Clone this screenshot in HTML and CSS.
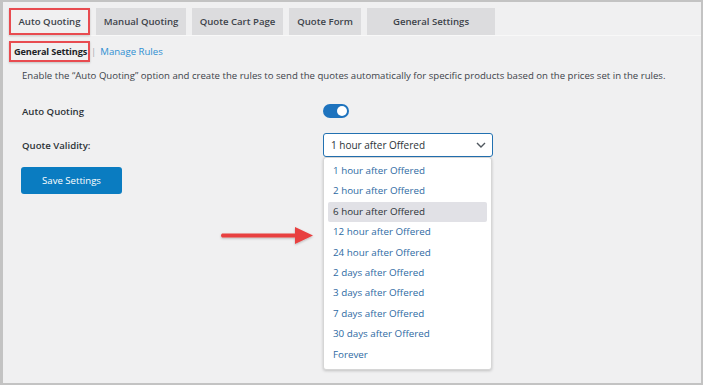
FILE: index.html
```html
<!DOCTYPE html>
<html>
<head>
<meta charset="utf-8">
<link rel="stylesheet" href="styles.css">
</head>
<body>
<div class="frame">
  <div class="tabs">
    <div class="tab tab-active w1">Auto Quoting</div>
    <div class="tab w2">Manual Quoting</div>
    <div class="tab w3">Quote Cart Page</div>
    <div class="tab w4">Quote Form</div>
    <div class="tab w5">General Settings</div>
  </div>
  <div class="subnav">
    <span class="sub-active">General Settings</span>
    <span class="sep">|</span>
    <a class="sub-link">Manage Rules</a>
  </div>
  <p class="desc">Enable the “Auto Quoting” option and create the rules to send the quotes automatically for specific products based on the prices set in the rules.</p>
  <div class="row row-toggle">
    <div class="label">Auto Quoting</div>
    <div class="toggle"><span class="knob"></span></div>
  </div>
  <div class="row row-select">
    <div class="label">Quote Validity:</div>
    <div class="select-wrap">
      <div class="select">
        <span>1 hour after Offered</span>
        <svg class="chev" width="10" height="6" viewBox="0 0 10 6"><path d="M1 1 L5 5 L9 1" fill="none" stroke="#50575e" stroke-width="1.4"/></svg>
      </div>
      <ul class="menu">
        <li>1 hour after Offered</li>
        <li>2 hour after Offered</li>
        <li class="hl">6 hour after Offered</li>
        <li>12 hour after Offered</li>
        <li>24 hour after Offered</li>
        <li>2 days after Offered</li>
        <li>3 days after Offered</li>
        <li>7 days after Offered</li>
        <li>30 days after Offered</li>
        <li>Forever</li>
      </ul>
    </div>
  </div>
  <div class="btn">Save Settings</div>
  <svg class="arrow" width="100" height="26" viewBox="0 0 100 26">
    <defs>
      <filter id="sh" x="-10%" y="-30%" width="120%" height="160%">
        <feDropShadow dx="0" dy="1" stdDeviation="1" flood-color="#000" flood-opacity="0.25"/>
      </filter>
    </defs>
    <g filter="url(#sh)">
      <path d="M4 10.5 L77 10.5 L77 4 L95 12.5 L77 21 L77 14.5 L4 14.5 Q2 12.5 4 10.5 Z" fill="#e8403f"/>
    </g>
  </svg>
</div>
</body>
</html>
```
FILE: styles.css
```css
* { box-sizing: border-box; }
html, body { margin: 0; padding: 0; }
body {
  width: 703px;
  height: 385px;
  font-family: "Open Sans", "Noto Sans", sans-serif;
  font-size: 9.6px;
  color: #3c434a;
}
.frame {
  position: relative;
  width: 703px;
  height: 385px;
  background: #f0f0f1;
  border-top: 2px solid #c3c3c3;
  border-left: 3px solid #c3c3c3;
  border-right: 2px solid #c3c3c3;
  border-bottom: 2px solid #c3c3c3;
  padding: 6px 0 0 6px;
}
.tabs {
  display: flex;
  gap: 6px;
  height: 28px;
  border-bottom: 1px solid #f8f8f8;
}
.tab {
  height: 27px;
  background: #dcdcde;
  font-weight: 600;
  font-size: 9.6px;
  color: #3c434a;
  display: flex;
  align-items: center;
  justify-content: center;
  white-space: nowrap;
}
.tab-active {
  background: #f0f0f1;
  outline: 2px solid #e84b50;
  outline-offset: -2px;
  box-shadow: 0 1px 2px rgba(0,0,0,0.2);
}
.w1 { width: 81px; }
.w2 { width: 90px; }
.w3 { width: 91px; }
.w4 { width: 72px; }
.w5 { width: 128px; }
.subnav {
  display: flex;
  align-items: center;
  margin-top: 5px;
  height: 21px;
  white-space: nowrap;
}
.sub-active {
  display: flex;
  align-items: center;
  height: 21px;
  width: 81px;
  padding-left: 3px;
  font-weight: 700;
  font-size: 9.2px;
  letter-spacing: -0.15px;
  color: #1d2327;
  border: 2px solid #e84b50;
  box-shadow: 0 1px 2px rgba(0,0,0,0.2);
  overflow: hidden;
}
.sep { color: #a7aaad; margin: 0 4px 0 1px; }
.sub-link { color: #2f8fd1; }
.desc {
  margin: 7px 0 0 13px;
  line-height: 14px;
  color: #3c434a;
}
.row {
  display: flex;
  align-items: center;
  margin-left: 13px;
}
.label {
  width: 301px;
  font-weight: 600;
  color: #2c3338;
}
.row-toggle { margin-top: 20px; height: 16px; }
.toggle {
  width: 26px;
  height: 14px;
  border-radius: 7px;
  background: #1e73be;
  position: relative;
}
.knob {
  position: absolute;
  right: 2px;
  top: 2px;
  width: 10px;
  height: 10px;
  border-radius: 50%;
  background: #fff;
}
.row-select { margin-top: 14px; height: 24px; }
.select-wrap { position: relative; }
.select {
  width: 170px;
  height: 24px;
  border: 1px solid #2271b1;
  border-radius: 3px;
  background: #fff;
  display: flex;
  align-items: center;
  justify-content: space-between;
  padding: 0 6px 0 7px;
  font-size: 10px;
  color: #2c3338;
}
.menu {
  position: absolute;
  left: 0;
  top: 24px;
  width: 169px;
  margin: 0;
  padding: 3px 4px 4px 4px;
  list-style: none;
  background: #fff;
  border: 1px solid #d6d6d6;
  border-radius: 3px;
  box-shadow: 0 1px 3px rgba(0,0,0,0.2);
  z-index: 2;
}
.menu li {
  height: 20.4px;
  line-height: 20.4px;
  padding-left: 5px;
  font-size: 9.8px;
  color: #2e6aa3;
  border-radius: 2px;
}
.menu li.hl {
  background: #e1e1e6;
  color: #2c3338;
}
.btn {
  margin: 10px 0 0 12px;
  width: 101px;
  height: 27px;
  border-radius: 3px;
  background: #0a7cc1;
  color: #fff;
  display: flex;
  align-items: center;
  justify-content: center;
}
.arrow {
  position: absolute;
  left: 215px;
  top: 221px;
}
```
